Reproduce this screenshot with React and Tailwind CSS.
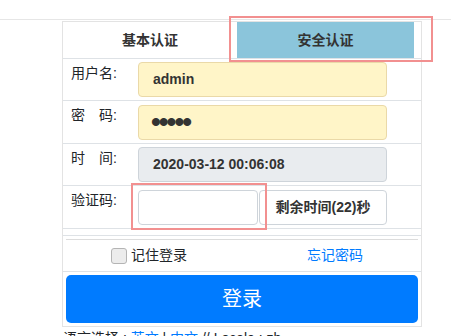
export default function App() {
  const font = { fontFamily: '"Liberation Sans", "Noto Sans CJK SC", sans-serif' }

  return (
    <div className="relative w-[451px] h-[336px] overflow-hidden bg-white text-[14px] text-[#212529]" style={font}>
      {/* top rule */}
      <div className="h-[20px] border-b border-[#e6e6e6]" />

      <div className="ml-[62px] mt-[1px] w-[360px] border border-[#e3e3e3]">
        {/* tabs */}
        <div className="flex h-[37px] border-b border-[#dee2e6]">
          <div className="w-[174px] flex items-center justify-center font-bold text-[#333]">基本认证</div>
          <div className="w-[177px] flex items-center justify-center font-bold text-[#333] bg-[#8bc5db]">安全认证</div>
        </div>

        {/* username */}
        <div className="flex h-[42px] border-b border-[#dee2e6]">
          <div className="w-[75px] pl-[8px] pt-[4px] leading-[21px]">用户名:</div>
          <div className="flex items-center">
            <div className="w-[249px] h-[35px] flex items-center pl-[14px] rounded-[4px] border border-[#ead9a8] bg-[#fff5c8] font-bold text-[#333]">admin</div>
          </div>
        </div>

        {/* password */}
        <div className="flex h-[43px] border-b border-[#dee2e6]">
          <div className="w-[75px] pl-[8px] pt-[4px] leading-[21px]">密　码:</div>
          <div className="flex items-center">
            <div className="w-[249px] h-[35px] flex items-center pl-[12px] rounded-[4px] border border-[#ead9a8] bg-[#fff5c8] font-bold text-[#333] text-[28px] tracking-[-2px]">•••••</div>
          </div>
        </div>

        {/* time */}
        <div className="flex h-[42px] border-b border-[#dee2e6]">
          <div className="w-[75px] pl-[8px] pt-[4px] leading-[21px]">时　间:</div>
          <div className="flex items-center">
            <div className="w-[249px] h-[35px] flex items-center pl-[14px] rounded-[4px] border border-[#ced4da] bg-[#e9ecef] font-bold text-[#333]">2020-03-12 00:06:08</div>
          </div>
        </div>

        {/* captcha */}
        <div className="flex h-[43px] border-b border-[#dee2e6]">
          <div className="w-[75px] pl-[8px] pt-[4px] leading-[21px]">验证码:</div>
          <div className="flex items-center gap-[1px]">
            <div className="w-[120px] h-[35px] rounded-[4px] border border-[#ced4da] bg-white" />
            <div className="w-[128px] h-[35px] flex items-center justify-center rounded-[4px] border border-[#ced4da] bg-white font-bold text-[#333]">剩余时间(22)秒</div>
          </div>
        </div>

        <div className="h-[7px] border-b border-[#dee2e6]" />

        {/* remember / forgot */}
        <div className="h-[36px] border-b border-[#dee2e6] px-[3px] pt-[3px]">
          <div className="h-[1px] bg-[#dcdcdc]" />
          <div className="flex h-[31px] items-center">
            <div className="flex-1 flex items-center justify-center gap-[4px] pr-[20px]">
              <span className="w-[16px] h-[16px] rounded-[3px] border border-[#b4b4b4] bg-[#ececec]" />
              <span>记住登录</span>
            </div>
            <div className="flex-1 flex items-center justify-center text-[#007bff]">忘记密码</div>
          </div>
        </div>

        {/* login */}
        <div className="px-[3px] pt-[3px] pb-[3px]">
          <div className="h-[48px] rounded-[5px] bg-[#007bff] text-white text-[20px] flex items-center justify-center">登录</div>
        </div>
      </div>

      <div className="pl-[63px] pt-[1px] leading-[21px]">
        语言选择 : <span className="text-[#007bff]">英文</span> | <span className="text-[#007bff]">中文</span> // Locale : zh
      </div>

      {/* annotation boxes */}
      <div className="absolute left-[229px] top-[16px] w-[204px] h-[46px] border-2 border-[#f29090]" />
      <div className="absolute left-[131px] top-[183px] w-[136px] h-[47px] border-2 border-[#f29090]" />
    </div>
  )
}
